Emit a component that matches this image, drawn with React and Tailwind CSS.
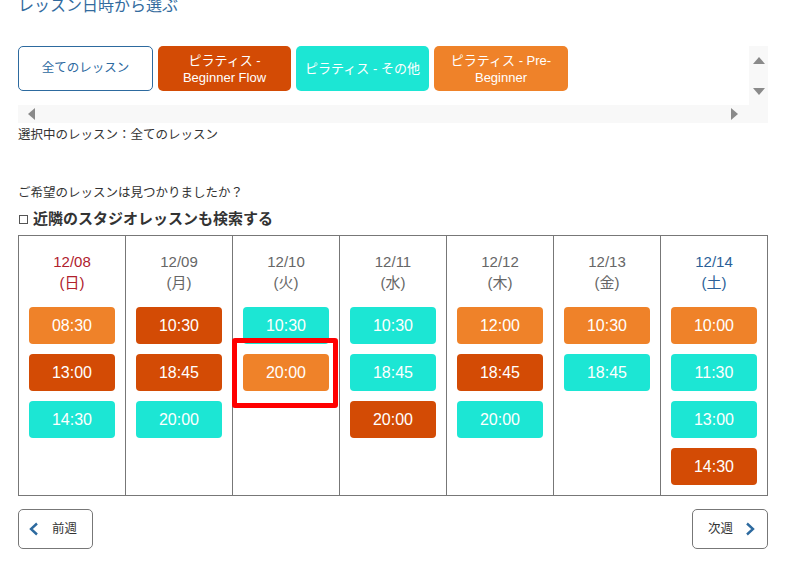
import React from "react";

const C = {
  red: "bg-[#d34b05]",
  tq: "bg-[#1ce6d4]",
  or: "bg-[#ef8229]",
};

const days = [
  { d: "12/08", w: "(日)", c: "text-[#b0212d]", t: [["08:30", "or"], ["13:00", "red"], ["14:30", "tq"]] },
  { d: "12/09", w: "(月)", c: "text-[#666666]", t: [["10:30", "red"], ["18:45", "red"], ["20:00", "tq"]] },
  { d: "12/10", w: "(火)", c: "text-[#666666]", t: [["10:30", "tq"], ["20:00", "or"]], hl: true },
  { d: "12/11", w: "(水)", c: "text-[#666666]", t: [["10:30", "tq"], ["18:45", "tq"], ["20:00", "red"]] },
  { d: "12/12", w: "(木)", c: "text-[#666666]", t: [["12:00", "or"], ["18:45", "red"], ["20:00", "tq"]] },
  { d: "12/13", w: "(金)", c: "text-[#666666]", t: [["10:30", "or"], ["18:45", "tq"]] },
  { d: "12/14", w: "(土)", c: "text-[#2b5f98]", t: [["10:00", "or"], ["11:30", "tq"], ["13:00", "tq"], ["14:30", "red"]] },
];

function Tri({ dir, className }) {
  const pts = {
    up: "0,9 6,2 12,9",
    down: "0,3 6,10 12,3",
    left: "9,0 2,6 9,12",
    right: "3,0 10,6 3,12",
  }[dir];
  return (
    <svg width="12" height="12" viewBox="0 0 12 12" className={className}>
      <polygon points={pts} fill="#8a8a8a" />
    </svg>
  );
}

export default function App() {
  return (
    <div
      className="w-[789px] h-[568px] overflow-hidden bg-white px-[18px]"
      style={{ fontFamily: '"Liberation Sans", "Noto Sans CJK JP", sans-serif' }}
    >
      <div className="mt-[-6px] text-[16px] leading-[24px] text-[#336b9e]">レッスン日時から選ぶ</div>

      <div className="mt-[28px] flex h-[77px] w-[750px]">
        <div className="flex w-[731px] flex-col">
          <div className="flex h-[59px] gap-[5px]">
            <div className="flex h-[45px] w-[135px] items-center justify-center rounded-[5px] border border-[#2d6a9f] text-[12.5px] text-[#2d6a9f]">
              全てのレッスン
            </div>
            <div className="flex h-[45px] w-[133px] flex-col items-center justify-center rounded-[5px] bg-[#d34b05] text-center text-[13px] leading-[17px] text-white">
              <span>ピラティス -</span>
              <span>Beginner Flow</span>
            </div>
            <div className="flex h-[45px] w-[133px] items-center justify-center rounded-[5px] bg-[#1ce6d4] text-[13px] text-white">
              ピラティス - その他
            </div>
            <div className="flex h-[45px] w-[134px] flex-col items-center justify-center rounded-[5px] bg-[#ef8229] text-center text-[13px] leading-[17px] text-white">
              <span>ピラティス - Pre-</span>
              <span>Beginner</span>
            </div>
          </div>
          <div className="flex h-[18px] items-center justify-between bg-[#f8f8f8] pl-[8px] pr-[9px]">
            <Tri dir="left" />
            <Tri dir="right" />
          </div>
        </div>
        <div className="flex w-[19px] flex-col items-center bg-[#f8f8f8] pt-[9px]">
          <Tri dir="up" />
          <div className="h-[18px]" />
          <Tri dir="down" />
        </div>
      </div>

      <div className="mt-[2px] text-[12.5px] leading-[20px] text-[#333333]">選択中のレッスン：全てのレッスン</div>

      <div className="mt-[38px] text-[12.5px] leading-[20px] text-[#333333]">ご希望のレッスンは見つかりましたか？</div>
      <div className="mt-[6px] flex items-center text-[15px] font-bold leading-[20px] text-[#333333]">
        <span className="ml-[1px] mr-[5px] inline-block h-[9px] w-[9px] border border-[#555555] bg-white" />
        近隣のスタジオレッスンも検索する
      </div>

      <div className="mt-[6px] flex h-[261px] w-[750px] border border-[#777777]">
        {days.map((day, i) => (
          <div
            key={day.d}
            className={`relative flex flex-1 flex-col items-stretch px-[10px] pt-[15px] ${i < 6 ? "border-r border-[#777777]" : ""}`}
          >
            <div className={`text-center text-[15px] leading-[21px] ${day.c}`}>
              <div>{day.d}</div>
              <div>{day.w}</div>
            </div>
            <div className="mt-[14px] flex flex-col gap-[10px]">
              {day.t.map(([time, col], j) => (
                <div
                  key={j}
                  className={`flex h-[37px] items-center justify-center rounded-[4px] text-[16px] text-white ${C[col]}`}
                >
                  {time}
                </div>
              ))}
            </div>
            {day.hl && (
              <div className="pointer-events-none absolute left-[-1px] top-[102px] h-[70px] w-[106px] rounded-[3px] border-[5px] border-[#ff0000]" />
            )}
          </div>
        ))}
      </div>

      <div className="mt-[13px] flex w-[750px] justify-between">
        <div className="flex h-[40px] w-[75px] items-center rounded-[5px] border border-[#777777] pl-[10px] text-[12.5px] text-[#333333]">
          <svg width="10" height="14" viewBox="0 0 10 14" className="mr-[13px]">
            <polyline points="8,1.5 2,7 8,12.5" fill="none" stroke="#2d6a9f" strokeWidth="2.4" />
          </svg>
          前週
        </div>
        <div className="flex h-[40px] w-[76px] items-center justify-end rounded-[5px] border border-[#777777] pr-[12px] text-[12.5px] text-[#333333]">
          次週
          <svg width="10" height="14" viewBox="0 0 10 14" className="ml-[12px]">
            <polyline points="2,1.5 8,7 2,12.5" fill="none" stroke="#2d6a9f" strokeWidth="2.4" />
          </svg>
        </div>
      </div>
    </div>
  );
}
